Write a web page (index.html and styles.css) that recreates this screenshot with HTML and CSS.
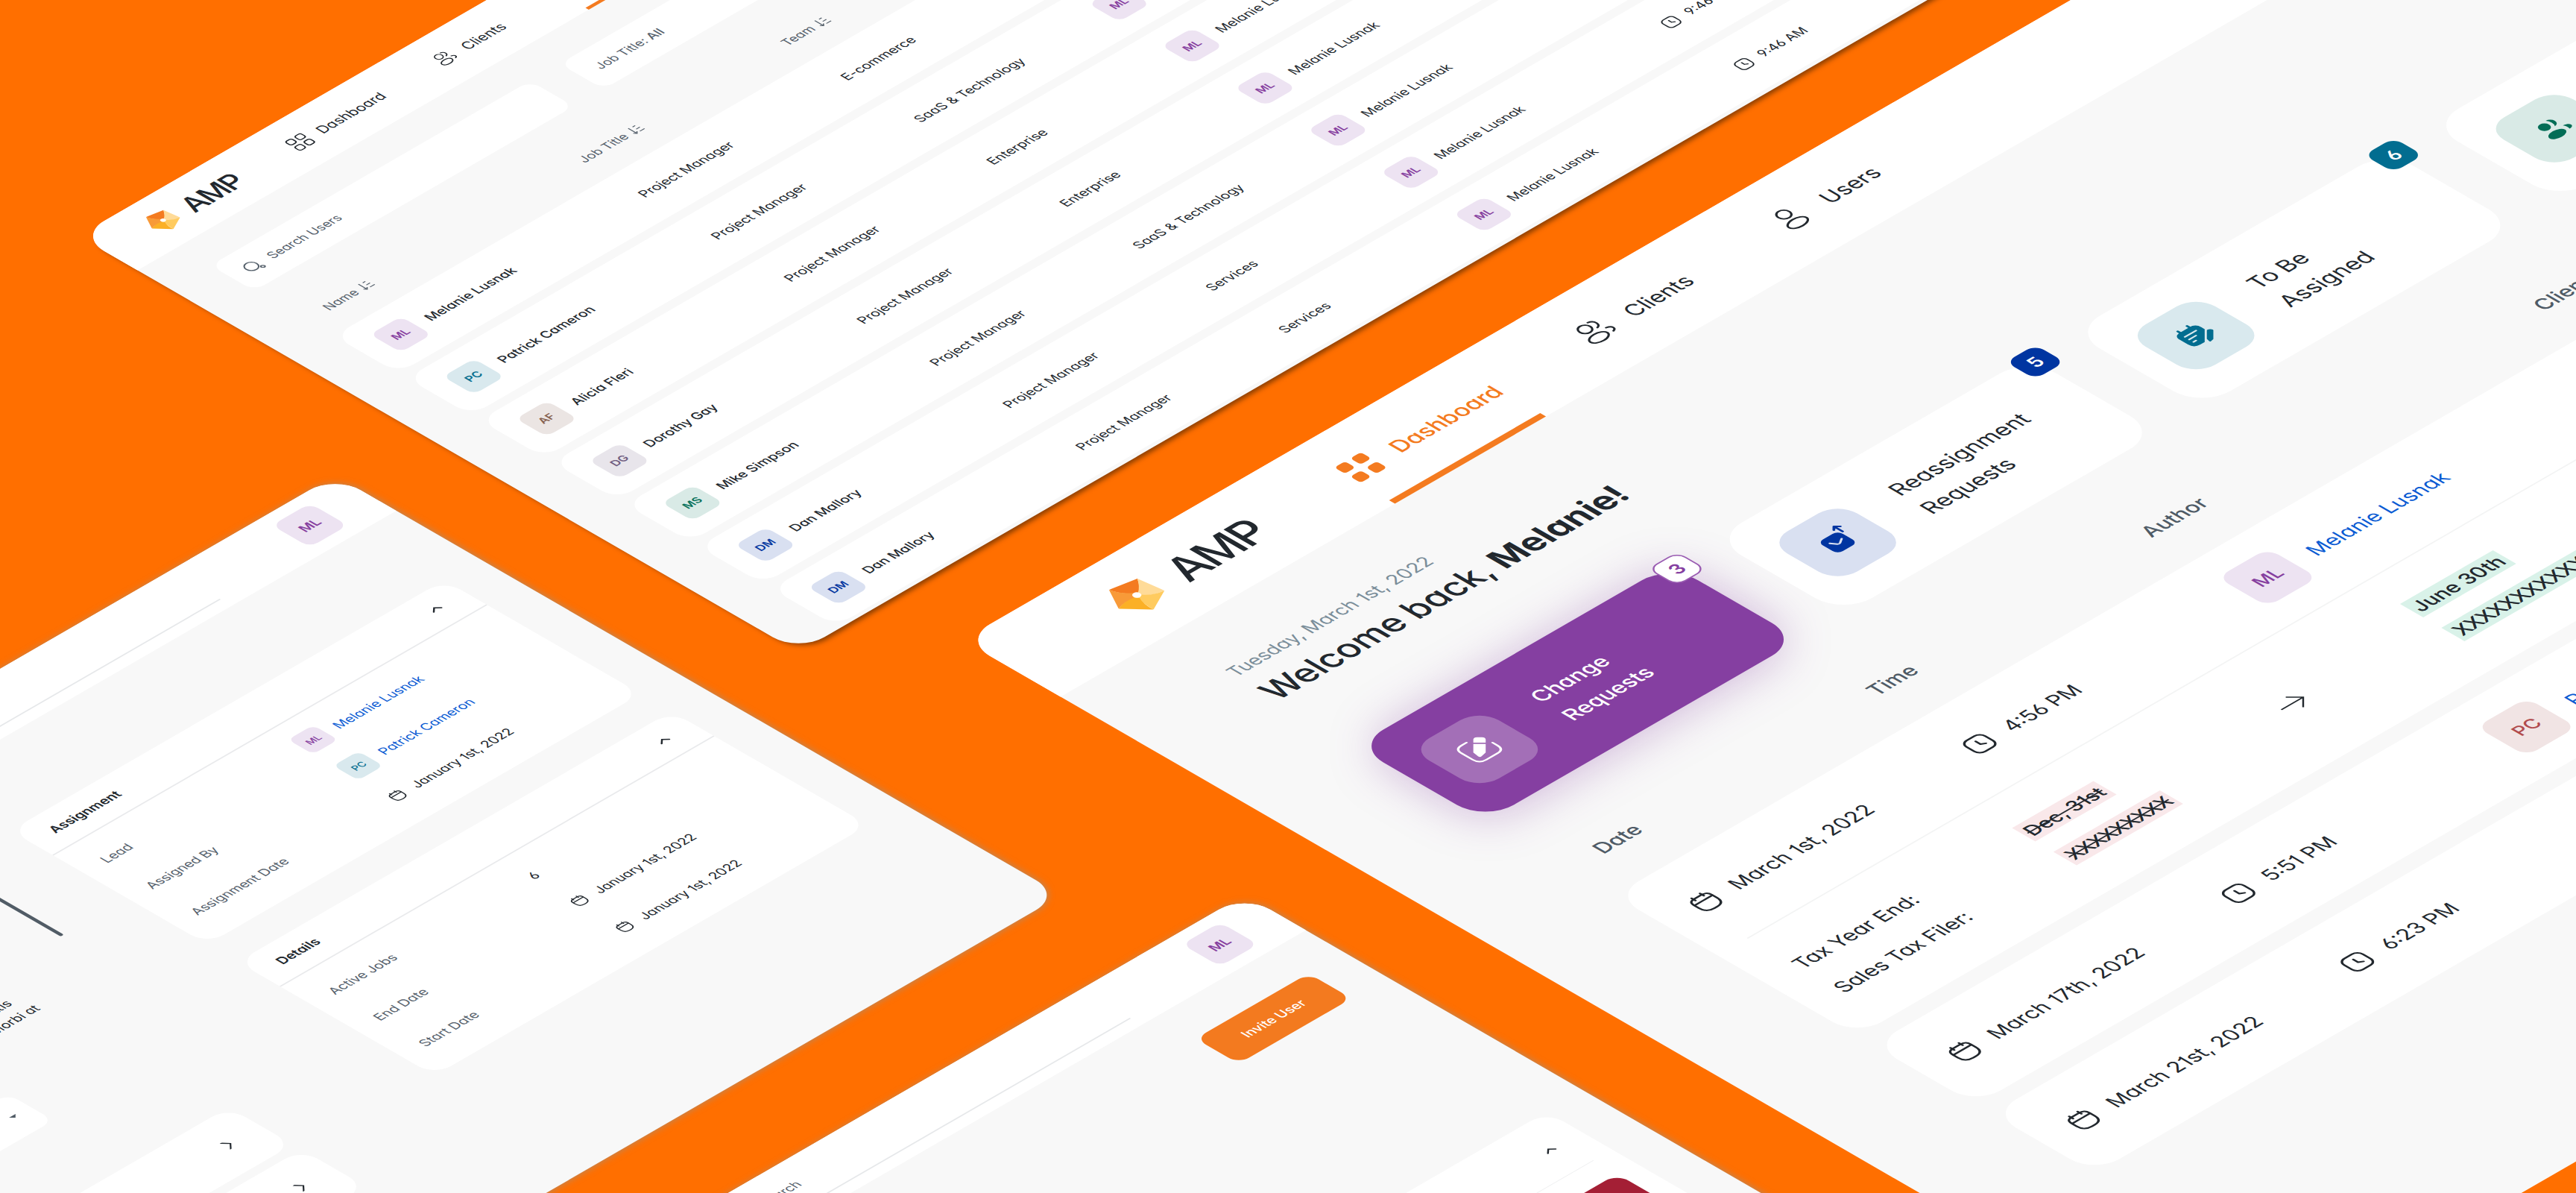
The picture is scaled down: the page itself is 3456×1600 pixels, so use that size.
FILE: index.html
```html
<!DOCTYPE html>
<html lang="en">
<head>
<meta charset="utf-8">
<title>AMP</title>
<link rel="stylesheet" href="styles.css">
</head>
<body>
<svg class="defs" width="0" height="0" aria-hidden="true">
  <symbol id="logo" viewBox="0 0 60 61">
    <path fill="#f47b20" d="M18 0 55 7Q45 22 37 28L31 23Q20 14 18 0Z"/>
    <path fill="#ffdb98" d="M55 7 60 44Q44 42 36 34L37 26Q46 20 55 7Z"/>
    <path fill="#ffcb5f" d="M60 44 26 61Q26 46 29 35L37 32Q44 42 60 44Z"/>
    <path fill="#fbb026" d="M26 61 0 33Q14 27 26 28L31 34Q25 46 26 61Z"/>
    <path fill="#f89a38" d="M0 33 18 0Q22 16 33 23L27 30Q14 27 0 33Z"/>
    <circle cx="32.5" cy="28.500" r="5" fill="#fff"/>
  </symbol>
  <symbol id="grid" viewBox="0 0 44 44">
    <g fill="none" stroke="currentColor" stroke-width="2.800"><rect x="2" y="2" width="16" height="16" rx="5"/><rect x="26" y="2" width="16" height="16" rx="5"/><rect x="2" y="26" width="16" height="16" rx="5"/><rect x="26" y="26" width="16" height="16" rx="5"/></g>
  </symbol>
  <symbol id="grid-solid" viewBox="0 0 44 44">
    <g fill="currentColor"><rect x="1.500" y="1.500" width="16.500" height="16.500" rx="5"/><rect x="26" y="1.500" width="16.500" height="16.500" rx="5"/><rect x="1.500" y="26" width="16.500" height="16.500" rx="5"/><rect x="26" y="26" width="16.500" height="16.500" rx="5"/></g>
  </symbol>
  <symbol id="clients" viewBox="0 0 44 44">
    <g fill="none" stroke="currentColor" stroke-width="2.600" stroke-linecap="round"><circle cx="18" cy="10.500" r="8"/><ellipse cx="18" cy="32" rx="13" ry="7.800"/><path d="M29 3.500c4.500 1 6.500 4 6.500 7.200s-2 6-5.500 7M36.500 24.500c4 1 6 3 6 5.300s-2 4-4.500 4.700"/></g>
  </symbol>
  <symbol id="user" viewBox="0 0 44 44">
    <g fill="none" stroke="currentColor" stroke-width="2.600"><circle cx="22" cy="10.500" r="8.300"/><ellipse cx="22" cy="32" rx="13.500" ry="8"/></g>
  </symbol>
  <symbol id="calendar" viewBox="0 0 36 36">
    <g fill="none" stroke="currentColor" stroke-width="2.700" stroke-linecap="round"><path d="M4 13c0-6 3-8 9-8h10c6 0 9 2 9 8v8c0 8-4 12-12 12h-4c-8 0-12-4-12-12Z"/><path d="M4.500 14h27M11.500 2v6M24.500 2v6"/></g>
  </symbol>
  <symbol id="clock" viewBox="0 0 36 36">
    <g fill="none" stroke="currentColor" stroke-width="2.700" stroke-linecap="round" stroke-linejoin="round"><rect x="3.500" y="3.500" width="29" height="29" rx="8.500"/><path d="M18 11.500v7.500l5.500 3.200"/></g>
  </symbol>
  <symbol id="search" viewBox="0 0 24 24">
    <g fill="none" stroke="currentColor" stroke-width="1.700"><circle cx="10.500" cy="11" r="8"/><ellipse cx="19.500" cy="19.800" rx="2.400" ry="1.900" transform="rotate(45 19.500 19.800)"/></g>
  </symbol>
  <symbol id="sort" viewBox="0 0 16 16">
    <path fill="none" stroke="currentColor" stroke-width="1.200" d="M4 1.500v12M1.500 11 4 13.700 6.500 11M8.500 13h6.500M8.500 8h5M8.500 3h3.500"/>
  </symbol>
  <symbol id="arrow" viewBox="0 0 36 30">
    <path fill="none" stroke="currentColor" stroke-width="2" d="M0 15h34M20.500 1.500 34 15 20.500 28.500"/>
  </symbol>
  <symbol id="up" viewBox="0 0 16 16"><path fill="none" stroke="currentColor" stroke-width="2" stroke-linecap="round" d="M2 11 8 5.500 14 11"/></symbol>
  <symbol id="right" viewBox="0 0 16 16"><path fill="none" stroke="currentColor" stroke-width="1.800" stroke-linecap="round" d="M4.500 0 12 8 4.500 16"/></symbol>
  <symbol id="edit" viewBox="0 0 48 48">
    <path fill="none" stroke="currentColor" stroke-width="2.800" stroke-linecap="round" d="M23 4H15Q4 4 4 15V33Q4 44 15 44H33Q44 44 44 33V25"/>
    <path fill="currentColor" d="M26.500 11.500 36.500 21.500 24.500 33.500 15.500 35.500Q13 36 13 33L14.500 23.500ZM28.500 9.500 33 5Q36 2.500 39 5L43 9Q45.500 12 43 15L38.500 19.500Z"/>
  </symbol>
  <symbol id="inbox" viewBox="0 0 56 56">
    <rect x="12.500" y="12.500" width="31" height="31" rx="8" fill="currentColor"/>
    <path fill="none" stroke="#fff" stroke-opacity=".85" stroke-width="2.600" stroke-linecap="round" stroke-linejoin="round" d="M20.500 23 25.500 30Q27 31.500 29 30.500L36 26"/>
    <path fill="none" stroke="#d9e0f1" stroke-width="4" d="M46.500 20V6"/>
    <path fill="none" stroke="currentColor" stroke-width="3" stroke-linecap="round" stroke-linejoin="round" d="M46.500 17V4.500M41.500 8.500 46.500 3.500 51.500 8.500"/>
  </symbol>
  <symbol id="note" viewBox="0 0 48 48">
    <path fill="currentColor" d="M5 17Q5 7 15 7H30Q40 7 40 17V22L22 40H15Q5 40 5 30Z"/>
    <path stroke="currentColor" stroke-width="3.400" stroke-linecap="round" d="M15 3.500v7M30 3.500v7"/>
    <path stroke="#d9e9ee" stroke-width="2.600" stroke-linecap="round" d="M13 17h18M13 24h11M13 31h4"/>
    <path fill="currentColor" d="M40 25.500Q42 24 44 26L45 27Q47 29 45 31L33 43 28 44Q26.500 44 26.800 42.500L28 37.500Z"/>
  </symbol>
  <symbol id="people" viewBox="0 0 44 44">
    <g fill="currentColor"><circle cx="16" cy="12" r="7.500"/><ellipse cx="17" cy="32" rx="12.500" ry="7.500"/><path d="M26 4a7.500 7.500 0 0 1 0 15q2.500-3 2.500-7.500T26 4ZM33.500 24.500c5 .7 8 2.700 8 5.300s-2.700 4.500-7 4.700q2-5.500-1-10Z"/></g>
  </symbol>
</svg>

<main class="stage">
<div class="scene">

  <section class="window users">
    <header class="bar">
      <div class="brand"><svg><use href="#logo"/></svg><span>AMP</span></div>
      <nav>
        <a><svg><use href="#grid"/></svg>Dashboard</a>
        <a><svg><use href="#clients"/></svg>Clients</a>
        <a class="active"><svg><use href="#user"/></svg>Users</a>
      </nav>
    </header>
    <div class="filters">
      <div class="field"><svg><use href="#search"/></svg>Search Users</div>
      <div class="field select">Job Title:&nbsp;<b>All</b></div>
    </div>
    <div class="cols thead">
      <span>Name <svg><use href="#sort"/></svg></span>
      <span>Job Title <svg><use href="#sort"/></svg></span>
      <span>Team <svg><use href="#sort"/></svg></span>
    </div>
    <div class="rows">
      <div class="cols row"><span class="who"><i class="tile purple">ML</i>Melanie Lusnak</span><span>Project Manager</span><span>E-commerce</span><span class="lead"><i class="tile purple">ML</i>Melanie Lusnak</span><span class="time"><svg><use href="#clock"/></svg>9:46 AM</span></div>
      <div class="cols row"><span class="who"><i class="tile teal">PC</i>Patrick Cameron</span><span>Project Manager</span><span>SaaS &amp; Technology</span><span class="lead"><i class="tile purple">ML</i>Melanie Lusnak</span><span class="time"><svg><use href="#clock"/></svg>9:46 AM</span></div>
      <div class="cols row"><span class="who"><i class="tile brown">AF</i>Alicia Fleri</span><span>Project Manager</span><span>Enterprise</span><span class="lead"><i class="tile purple">ML</i>Melanie Lusnak</span><span class="time"><svg><use href="#clock"/></svg>9:46 AM</span></div>
      <div class="cols row"><span class="who"><i class="tile plum">DG</i>Dorothy Gay</span><span>Project Manager</span><span>Enterprise</span><span class="lead"><i class="tile purple">ML</i>Melanie Lusnak</span><span class="time"><svg><use href="#clock"/></svg>9:46 AM</span></div>
      <div class="cols row"><span class="who"><i class="tile green">MS</i>Mike Simpson</span><span>Project Manager</span><span>SaaS &amp; Technology</span><span class="lead"><i class="tile purple">ML</i>Melanie Lusnak</span><span class="time"><svg><use href="#clock"/></svg>9:46 AM</span></div>
      <div class="cols row"><span class="who"><i class="tile blue">DM</i>Dan Mallory</span><span>Project Manager</span><span>Services</span><span class="lead"><i class="tile purple">ML</i>Melanie Lusnak</span><span class="time"><svg><use href="#clock"/></svg>9:46 AM</span></div>
      <div class="cols row"><span class="who"><i class="tile blue">DM</i>Dan Mallory</span><span>Project Manager</span><span>Services</span><span class="lead"><i class="tile purple">ML</i>Melanie Lusnak</span><span class="time"><svg><use href="#clock"/></svg>9:46 AM</span></div>
    </div>
  </section>

  <section class="window client">
    <header class="topbar"><div class="find"></div><i class="tile purple">ML</i></header>
    <div class="split">
      <div class="content">
        <p><span>mattis</span>Morbi at</p>
        <div class="drop"><b></b></div>
        <div class="item"><svg><use href="#right"/></svg></div>
        <div class="item"><svg><use href="#right"/></svg></div>
      </div>
      <div class="scroll"></div>
      <aside>
        <div class="card">
          <h3>Assignment<svg><use href="#up"/></svg></h3>
          <dl>
            <dt>Lead</dt><dd class="link"><i class="tile purple">ML</i>Melanie Lusnak</dd>
            <dt>Assigned By</dt><dd class="link"><i class="tile teal">PC</i>Patrick Cameron</dd>
            <dt>Assignment Date</dt><dd><svg><use href="#calendar"/></svg>January 1st, 2022</dd>
          </dl>
        </div>
        <div class="card">
          <h3>Details<svg><use href="#up"/></svg></h3>
          <dl>
            <dt>Active Jobs</dt><dd class="num">6</dd>
            <dt>End Date</dt><dd><svg><use href="#calendar"/></svg>January 1st, 2022</dd>
            <dt>Start Date</dt><dd><svg><use href="#calendar"/></svg>January 1st, 2022</dd>
          </dl>
        </div>
      </aside>
    </div>
  </section>

  <section class="window invite">
    <header class="topbar"><div class="find">Search</div><i class="tile purple">ML</i></header>
    <button>Invite User</button>
    <div class="panel">
      <div class="panel-head"><svg><use href="#up"/></svg></div>
      <div class="swatch"></div>
    </div>
  </section>

  <section class="window dash">
    <header class="bar">
      <div class="brand"><svg><use href="#logo"/></svg><span>AMP</span></div>
      <nav>
        <a class="active"><svg><use href="#grid-solid"/></svg>Dashboard</a>
        <a><svg><use href="#clients"/></svg>Clients</a>
        <a><svg><use href="#user"/></svg>Users</a>
      </nav>
    </header>
    <div class="page">
      <p class="today">Tuesday, March 1st, 2022</p>
      <h1>Welcome back, <b>Melanie!</b></h1>
      <div class="stats">
        <div class="stat on"><i class="pic"><svg><use href="#edit"/></svg></i><span>Change<br>Requests</span><em>3</em></div>
        <div class="stat navy"><i class="pic"><svg class="big"><use href="#inbox"/></svg></i><span>Reassignment<br>Requests</span><em>5</em></div>
        <div class="stat sea"><i class="pic"><svg><use href="#note"/></svg></i><span>To Be<br>Assigned</span><em>6</em></div>
        <div class="stat leaf"><i class="pic"><svg class="small"><use href="#people"/></svg></i></div>
      </div>
      <div class="grid head"><span>Date</span><span>Time</span><span>Author</span><span>Clients</span></div>
      <div class="list">
        <div class="entry">
          <div class="grid line"><span><svg><use href="#calendar"/></svg>March 1st, 2022</span><span><svg><use href="#clock"/></svg>4:56 PM</span><span class="link"><i class="tile purple">ML</i>Melanie Lusnak</span></div>
          <div class="diff">
            <div><span>Tax Year End:</span><span>Sales Tax Filer:</span></div>
            <div><s>Dec, 31st</s><s class="x">XXXXXXXXX</s></div>
            <svg><use href="#arrow"/></svg>
            <div><ins>June 30th</ins><ins class="x">XXXXXXXXXXXX</ins></div>
          </div>
        </div>
        <div class="entry">
          <div class="grid line"><span><svg><use href="#calendar"/></svg>March 17th, 2022</span><span><svg><use href="#clock"/></svg>5:51 PM</span><span class="link"><i class="tile rose">PC</i>Patrick Cameron</span></div>
        </div>
        <div class="entry">
          <div class="grid line"><span><svg><use href="#calendar"/></svg>March 21st, 2022</span><span><svg><use href="#clock"/></svg>6:23 PM</span></div>
        </div>
      </div>
    </div>
  </section>

</div>
</main>
</body>
</html>
```

FILE: styles.css
```css
* { box-sizing: border-box; margin: 0; padding: 0; }
body { background: #ff6f00; font-family: Inter, "Open Sans", sans-serif; font-feature-settings: "cv11", "cv01", "cv03", "cv04"; font-weight: 400; color: #22282e; }
.defs { display: block; height: 0; }
svg { display: block; flex: none; overflow: visible; }
i, em { font-style: normal; }
.stage { position: relative; width: 3456px; height: 1600px; overflow: hidden; background: #ff6f00; }
/* isometric plane shared by every window */
.scene { position: absolute; left: 0; top: 0; width: 1px; height: 1px; transform-origin: 0 0; transform: matrix(.866025, -.5, .866025, .5, 0, 0); }
.window { position: absolute; background: #f8f8f8; border-radius: 40px; }

.bar { display: flex; align-items: center; background: #fff; }
.brand { display: flex; align-items: center; font-weight: 500; }
.bar nav { display: grid; align-self: stretch; justify-items: start; }
.bar a { display: flex; align-items: center; position: relative; height: 100%; white-space: nowrap; }
.bar .active::after { content: ""; position: absolute; left: 0; right: 0; bottom: 0; background: #f47b20; }

.tile { display: flex; align-items: center; justify-content: center; flex: none; font-weight: 600; }
.purple { background: #ede3f2; color: #863f9f; }
.teal { background: #d9e9ee; color: #066f90; }
.brown { background: #ebe5e3; color: #85604f; }
.plum { background: #e8e5eb; color: #705d80; }
.green { background: #d9eae6; color: #067059; }
.blue { background: #d9e0f1; color: #0437a0; }
.rose { background: #f1e4e4; color: #b14b4d; }
.link { color: #0a5bd3; }

/* users window */
.users { left: -256px; top: 376.5px; width: 2100px; height: 1116px; font-size: 17.8px; box-shadow: 0 6px 6px -1px rgba(50, 25, 0, .55); }
.users .bar { height: 92px; padding-left: 67px; border-radius: 40px 0 0 0; }
.users .brand { width: 217.5px; gap: 17px; font-size: 38.5px; }
.users .brand svg { width: 37px; height: 37.500px; }
.users .brand span { letter-spacing: -2px; }
.users nav { grid-template-columns: 224.5px 190px 200px; font-size: 19px; }
.users nav a { gap: 16px; padding-top: 1px; }
.users nav svg { width: 26px; height: 26px; }
.users .active::after { height: 5px; }
.filters { display: flex; gap: 46px; padding: 50px 0 0 63px; }
.field { display: flex; align-items: center; width: 495px; height: 68px; padding-left: 20px; gap: 13px; background: #fff; border-radius: 16px; color: #56616c; font-size: 17px; }
.field svg { width: 24px; height: 24px; }
.field.select { padding-left: 24px; gap: 0; }
.field b { font-weight: 500; }
.cols { display: grid; grid-template-columns: 396px 314px 290px 416px 1fr; padding-left: 30px; align-items: center; }
.thead { margin: 66px 0 30px 64px; height: 26px; color: #56616c; font-size: 17px; }
.thead span { display: flex; align-items: center; gap: 6px; }
.thead svg { width: 18px; height: 18px; }
.rows { display: grid; gap: 13px; padding-left: 64px; }
.row { height: 100px; background: #fff; border-radius: 24px; }
.row .tile { width: 48px; height: 48px; border-radius: 11px; font-size: 15px; }
.who, .lead, .time { display: flex; align-items: center; gap: 17px; }
.who { font-weight: 500; }
.lead { gap: 16px; }
.time svg { width: 22px; height: 22px; }
.time { gap: 13px; }

/* shared by the two search-bar windows */
.topbar { display: flex; justify-content: flex-end; align-items: center; height: 95px; padding-right: 56.5px; background: #fff; border-radius: 0 40px 0 0; }
.topbar .tile { width: 59px; height: 59px; border-radius: 13px; font-size: 18px; margin-left: 139px; }
.find { width: 560px; height: 60px; align-self: flex-end; margin-bottom: 17px; padding: 0 0 14px 25px; display: flex; align-items: center; border-bottom: 2px solid #e6e8ea; color: #56616c; font-size: 17.3px; }

/* client window */
.client { left: -1700px; top: 896.5px; width: 1321.5px; height: 1126px; overflow: hidden; font-size: 17.8px; }
.client, .invite { box-shadow: 1px 1px 10px rgba(125, 160, 180, .55); }
.split { display: flex; padding-right: 56px; }
.content { width: 392px; padding-top: 345px; }
.content p { text-align: right; line-height: 28px; padding-right: 13.5px; }
.content p span { display: block; padding-right: 15px; }
.drop { display: flex; justify-content: flex-end; align-items: center; height: 71px; margin: 80px 153.5px 118.5px 0; padding-right: 21px; background: #fff; border-radius: 16px; }
.drop b { border: 5px solid transparent; border-top-color: #515c66; border-bottom: 0; }
.item { display: flex; justify-content: flex-end; align-items: center; height: 100px; margin-bottom: 13px; padding-right: 43px; background: #fff; border-radius: 26px; }
.item svg { width: 16px; height: 16px; }
.scroll { width: 5px; height: 181px; margin: 130px 98px 0 99px; border-radius: 3px; background: #515c66; }
aside { display: grid; gap: 47.5px; width: 671.5px; padding-top: 130px; align-content: start; }
.card { height: 305px; background: #fff; border-radius: 26px; }
.card h3 { display: flex; align-items: center; justify-content: space-between; height: 67px; padding: 0 37px 0 31px; border-bottom: 2px solid #e9eaec; font-size: 18px; font-weight: 600; }
.card h3 svg { width: 16px; height: 16px; }
.card dl { display: grid; grid-template-columns: 306px 1fr; grid-auto-rows: 70px; padding: 11px 0 0 31px; align-items: center; }
.card dt { color: #56616c; }
.card dd { display: flex; align-items: center; gap: 15px; }
.card dd.num { padding-left: 3px; }
.card .tile { width: 39px; height: 39px; border-radius: 9px; font-size: 13px; font-weight: 500; }
.card dd svg { width: 20px; height: 20px; }

/* invite window */
.invite { left: -1636px; top: 2164px; width: 1400px; height: 1100px; }
.invite button { display: block; width: 175px; height: 67px; margin: 60px 56px 303px auto; border: 0; border-radius: 16px; background: #f37a1f; color: #fff; font: 500 18px Inter, sans-serif; }
.panel { height: 500px; margin: 0 57px; background: #fff; border-radius: 26px; padding: 0 29px; }
.panel-head { display: flex; justify-content: flex-end; align-items: center; height: 102px; padding: 6px 12px 0 0; border-bottom: 1px solid #eeeff0; }
.panel-head svg { width: 16px; height: 16px; }
.swatch { width: 80px; height: 80px; margin: 36px 0 0 auto; border-radius: 18px; background: #a41f35; }

/* dashboard window */
.dash { left: -113px; top: 1604px; width: 2500px; height: 1949px; border-radius: 42px; font-size: 28px; }
.dash .bar { height: 152px; padding-left: 163px; border-radius: 42px 0 0 0; }
.dash .brand { width: 355px; gap: 29px; font-size: 62px; }
.dash .brand svg { width: 60px; height: 61px; }
.dash .brand span { letter-spacing: -3.500px; }
.dash nav { grid-template-columns: 363px 304px 300px; font-size: 29.500px; }
.dash nav a { gap: 28px; padding-top: 2px; }
.dash nav svg { width: 44px; height: 44px; }
.dash .active { color: #f47b20; font-weight: 500; font-size: 30.5px; }
.dash .active::after { height: 9px; }
.page { padding: 84px 0 0 162px; }
.today { line-height: 34px; font-size: 25.3px; color: #7b8e9a; }
.dash h1 { margin: 9px 0 107px; line-height: 60px; font-size: 46.7px; font-weight: 450; letter-spacing: -.3px; }
.dash h1 b { font-weight: 650; }
.stats { display: flex; gap: 67px; }
.stat { display: flex; align-items: center; position: relative; flex: none; width: 488px; height: 202px; padding-left: 38px; gap: 56px; border-radius: 44px; background: #fff; font-size: 30.5px; line-height: 49px; }
.stat.on { background: #853fa1; color: #fff; font-weight: 500; font-size: 29px; box-shadow: 0 4px 62px rgba(133, 63, 161, .36); }
.pic { display: flex; align-items: center; justify-content: center; width: 108px; height: 108px; border-radius: 30px; }
.pic svg { width: 46px; height: 46px; }
.pic svg.big { width: 56px; height: 56px; }
.pic svg.small { width: 42px; height: 42px; }
.on .pic { background: #a36fb7; }
.navy .pic { background: #d9e0f1; color: #0035a1; }
.sea .pic { background: #d9e9ee; color: #026d90; }
.leaf .pic { background: #d9eae6; color: #026d56; }
.stat em { position: absolute; right: -22px; top: -11px; display: flex; align-items: center; justify-content: center; width: 46px; height: 46px; border-radius: 14px; color: #fff; font-size: 25px; font-weight: 600; }
.on em { background: #fff; border: 2px solid #9a5cb2; color: #853fa1; }
.navy em { background: #0035a1; }
.sea em { background: #026d90; }
.grid { display: grid; grid-template-columns: 424px 425px 608px 1fr; padding-left: 45px; align-items: center; }
.head { height: 40px; margin: 106px 0 53px; padding-left: 47px; color: #4f5b66; font-weight: 450; }
.list { display: grid; gap: 24px; }
.entry { background: #fff; border-radius: 38px; }
.line { height: 160px; }
.line span { display: flex; align-items: center; gap: 23px; }
.line span.link { gap: 27px; }
.line svg { width: 36px; height: 36px; }
.line .tile { width: 78px; height: 78px; border-radius: 17px; font-size: 25px; font-weight: 500; }
.diff { display: grid; grid-template-columns: 352px 367px 234px 1fr; align-items: center; margin-left: 46px; padding: 42px 0 45px 1px; border-top: 2px solid #f3f4f4; }
.diff div { display: grid; grid-auto-rows: 64px; align-items: center; justify-items: start; }
.diff svg { width: 36px; height: 30px; }
.diff s, .diff ins { height: 36px; line-height: 36px; padding: 0 5px; font-weight: 500; font-size: 26.5px; }
.diff s { background: #f9e8ea; }
.diff ins { background: #d9f2e9; text-decoration: none; font-size: 27.5px; }
.diff .x { letter-spacing: -1.4px; }
```
